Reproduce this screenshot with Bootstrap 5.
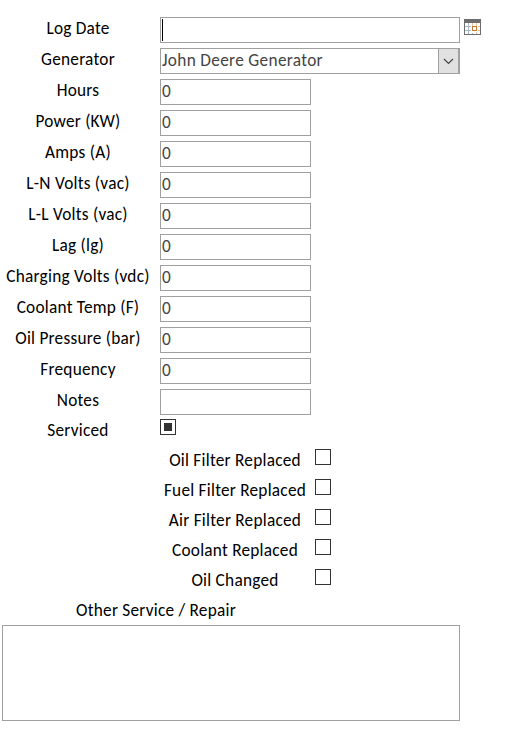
<!DOCTYPE html>
<html lang="en">
<head>
<meta charset="utf-8">
<meta name="viewport" content="width=device-width, initial-scale=1">
<title>Generator Log</title>
<link href="https://cdn.jsdelivr.net/npm/bootstrap@5.3.0/dist/css/bootstrap.min.css" rel="stylesheet">
<style>
body{font-family:Carlito,Lato,sans-serif;font-size:17.3px;letter-spacing:.23px;line-height:20px;color:#000;background:#fff;overflow:hidden}
.log-form{width:509px;height:735px;padding-top:17px}
.log-row{height:31px}
.log-label{width:156px;margin-right:4px;height:24px;line-height:24px;white-space:nowrap;text-align:center}
.log-form .form-control{width:151px;height:26px;min-height:0;padding:0 1px 2px 1px;line-height:22px;font-size:17.3px;color:#444;border:1px solid #a0a0a0;background-color:#fff;box-shadow:none}
.log-form .wide{width:300px}
.caret-line{width:1px;height:22px;margin:1px 0 0 0;background:#000}
.drop{width:22px;height:26px;background:#e1e1e1;border:1px solid #a0a0a0;border-right-width:2px}
.combo{width:300px;height:26px;border:1px solid #a0a0a0;color:#444;line-height:24px;padding-left:1px;letter-spacing:.32px}
.combo .drop{margin:-1px -1px -1px 0}
.log-form .form-check-input{width:16px;height:16px;margin:0;border:1px solid #333;background:#fff;box-shadow:none}
.log-form .form-check-input.mixed{background:linear-gradient(#333,#333) center/8px 8px no-repeat #fff}
.notes-row{height:30px}
.sub-row{height:30px;padding-left:155px}
.sub-label{width:160px;height:24px;line-height:24px;text-align:center;white-space:nowrap}
.other-label{width:312px;height:26px;line-height:24px;text-align:center}
.log-form .other-box{width:458px;height:96px;margin-left:2px;resize:none}
</style>
<script src="https://cdn.jsdelivr.net/npm/bootstrap@5.3.0/dist/js/bootstrap.bundle.min.js"></script>
</head>
<body>
<form class="log-form">
<div class="log-row d-flex"><label class="log-label">Log Date</label>
<div class="form-control rounded-0 wide"><div class="caret-line"></div></div>
<svg class="ms-1" width="17" height="18" viewBox="0 0 17 18" shape-rendering="crispEdges"><path fill="#fff" d="M0 2h17v16H0z"/><path fill="#a9bac9" d="M4 6h1v11H4zM1 9h6v1H1zM1 13h6v1H1zM8 16h1v1H8z"/><path fill="#e8c3a0" d="M12 6h1v3h-1zM8 6h1v3H8zM14 9h2v1h-2zM14 13h2v1h-2zM12 15h1v2h-1z"/><path fill="#6d6d6d" d="M0 2h17v4H0zM0 6h1v12H0zM16 6h1v12h-1zM0 17h17v1H0z"/><path fill="none" stroke="#c87832" d="M8.500 9.500h4v4h-4z"/></svg></div>
<div class="log-row d-flex"><label class="log-label">Generator</label>
<div class="combo d-flex justify-content-between"><span>John Deere Generator</span><div class="drop d-flex align-items-center justify-content-center"><svg width="11" height="7" viewBox="0 0 11 7"><path d="M1 1l4.500 4.500L10 1" fill="none" stroke="#444" stroke-width="1.200"/></svg></div></div></div>
<div class="log-row d-flex"><label class="log-label">Hours</label><input class="form-control rounded-0" value="0"></div>
<div class="log-row d-flex"><label class="log-label">Power (KW)</label><input class="form-control rounded-0" value="0"></div>
<div class="log-row d-flex"><label class="log-label">Amps (A)</label><input class="form-control rounded-0" value="0"></div>
<div class="log-row d-flex"><label class="log-label">L-N Volts (vac)</label><input class="form-control rounded-0" value="0"></div>
<div class="log-row d-flex"><label class="log-label">L-L Volts (vac)</label><input class="form-control rounded-0" value="0"></div>
<div class="log-row d-flex"><label class="log-label">Lag (lg)</label><input class="form-control rounded-0" value="0"></div>
<div class="log-row d-flex"><label class="log-label">Charging Volts (vdc)</label><input class="form-control rounded-0" value="0"></div>
<div class="log-row d-flex"><label class="log-label">Coolant Temp (F)</label><input class="form-control rounded-0" value="0"></div>
<div class="log-row d-flex"><label class="log-label">Oil Pressure (bar)</label><input class="form-control rounded-0" value="0"></div>
<div class="log-row d-flex"><label class="log-label">Frequency</label><input class="form-control rounded-0" value="0"></div>
<div class="notes-row d-flex"><label class="log-label">Notes</label><input class="form-control rounded-0"></div>
<div class="notes-row d-flex"><label class="log-label">Serviced</label><input type="checkbox" class="form-check-input rounded-0 mixed"></div>
<div class="sub-row d-flex"><label class="sub-label">Oil Filter Replaced</label><input type="checkbox" class="form-check-input rounded-0"></div>
<div class="sub-row d-flex"><label class="sub-label">Fuel Filter Replaced</label><input type="checkbox" class="form-check-input rounded-0"></div>
<div class="sub-row d-flex"><label class="sub-label">Air Filter Replaced</label><input type="checkbox" class="form-check-input rounded-0"></div>
<div class="sub-row d-flex"><label class="sub-label">Coolant Replaced</label><input type="checkbox" class="form-check-input rounded-0"></div>
<div class="sub-row d-flex"><label class="sub-label">Oil Changed</label><input type="checkbox" class="form-check-input rounded-0"></div>
<div class="other-label">Other Service / Repair</div>
<textarea class="form-control rounded-0 other-box"></textarea>
</form>
</body>
</html>
